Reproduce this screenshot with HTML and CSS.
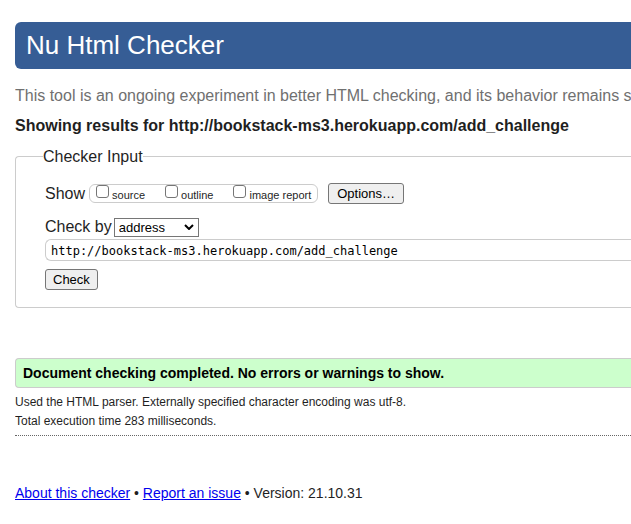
FILE: index.html
```html
<!DOCTYPE html>
<html lang="en">
<head>
<meta charset="utf-8">
<title>Nu Html Checker</title>
<link rel="stylesheet" href="styles.css">
</head>
<body>
<header class="banner"><h1>Nu Html Checker</h1></header>
<main>
  <p class="tagline">This tool is an ongoing experiment in better HTML checking, and its behavior remains s</p>
  <h2 class="results-for">Showing results for http://bookstack-ms3.herokuapp.com/add_challenge</h2>
  <form>
    <fieldset class="checker">
      <legend>Checker Input</legend>
      <div class="row show-row">
        <span>Show</span>
        <div class="show-options">
          <label><input type="checkbox"><span>source</span></label>
          <label><input type="checkbox"><span>outline</span></label>
          <label><input type="checkbox"><span>image report</span></label>
        </div>
        <button type="button" class="btn options">Options…</button>
      </div>
      <div class="row check-row">
        <label for="method">Check by</label>
        <div class="select-wrap">
          <select id="method"><option>address</option></select>
          <svg class="chevron" viewBox="0 0 10 6" aria-hidden="true"><path d="M1 1l4 4 4-4"/></svg>
        </div>
      </div>
      <input class="address" type="text" aria-label="Address" value="http://bookstack-ms3.herokuapp.com/add_challenge">
      <button type="button" class="btn">Check</button>
    </fieldset>
  </form>
  <section class="results">
    <p class="success">Document checking completed. No errors or warnings to show.</p>
    <p class="detail">Used the HTML parser. Externally specified character encoding was utf-8.</p>
    <p class="detail">Total execution time 283 milliseconds.</p>
  </section>
</main>
<footer><a href="#about">About this checker</a> • <a href="#issue">Report an issue</a> • Version: 21.10.31</footer>
</body>
</html>
```
FILE: styles.css
```css
* {
  box-sizing: border-box;
}

body {
  margin: 22px 0 0 15px;
  overflow-x: hidden;
  background: #fff;
  color: #1f1f1f;
  font: 16px/20px "Liberation Sans", Arial, sans-serif;
}

h1, h2, p {
  margin: 0;
}

.banner {
  padding: 8px 11px 9px;
  border-radius: 6px 0 0 6px;
  background: #365d95;
  color: #fff;
}

h1 {
  font-size: 26px;
  font-weight: 400;
  line-height: 30px;
}

.tagline {
  margin-top: 17px;
  overflow: hidden;
  color: #707070;
  white-space: nowrap;
}

.results-for {
  margin-top: 10px;
  font-size: 16px;
  line-height: 20px;
  white-space: nowrap;
}

.checker {
  min-width: 0;
  margin: 11px 0 0;
  padding: 17px 0 17px 29px;
  border: 1px solid #ccc;
  border-right: 0;
  border-radius: 4px 0 0 4px;
}

legend {
  margin-left: -2px;
  padding: 0;
  line-height: 19px;
}

.row {
  display: flex;
  align-items: center;
}

.show-options {
  display: flex;
  gap: 20px;
  height: 19px;
  margin: 0 10px 0 4px;
  padding: 0 6px;
  border: 1px solid #ccc;
  border-radius: 6px;
  font-size: 11px;
  line-height: 21px;
}

.show-options label {
  display: flex;
  gap: 3px;
}

.show-options input {
  width: 13px;
  height: 13px;
  margin: 0;
  appearance: none;
  border: 1px solid #767676;
  border-radius: 3px;
  background: #fff;
}

.show-options input:checked {
  background: #365d95;
}

.btn {
  display: block;
  height: 21px;
  padding: 0 7px;
  border: 1px solid #767676;
  border-radius: 3px;
  background: #efefef;
  color: #000;
  font: 13px/19px "Liberation Sans", Arial, sans-serif;
}

.options {
  padding: 0 8px;
}

.check-row {
  gap: 2px;
  margin-top: 13px;
}

.select-wrap {
  position: relative;
}

select {
  display: block;
  width: 85px;
  height: 19px;
  padding: 0 4px;
  appearance: none;
  border: 1px solid #767676;
  border-radius: 0;
  background: #fff;
  color: #000;
  font: 13px/17px "Liberation Sans", Arial, sans-serif;
}

.chevron {
  position: absolute;
  top: 6px;
  right: 5px;
  width: 10px;
  height: 6px;
  fill: none;
  stroke: #000;
  stroke-width: 2;
  pointer-events: none;
}

.address {
  display: block;
  width: 100%;
  height: 22px;
  margin: 2px 0 8px;
  padding: 2px 5px 0;
  border: 1px solid #ccc;
  border-right: 0;
  border-radius: 6px 0 0 6px;
  color: #000;
  font: 12px/18px "DejaVu Sans Mono", monospace;
}

.results {
  margin-top: 50px;
  padding-bottom: 4px;
  border-bottom: 1px dotted #666;
}

.success {
  margin-bottom: 5px;
  padding: 4px 7px;
  border: 1px solid #ccc;
  border-right: 0;
  border-radius: 4px 0 0 4px;
  background: #cfc;
  color: #000;
  font-size: 14px;
  font-weight: 700;
}

.detail {
  font-size: 12px;
  line-height: 19px;
}

footer {
  margin-top: 47px;
  font-size: 14px;
}

a {
  color: #00e;
}
```
